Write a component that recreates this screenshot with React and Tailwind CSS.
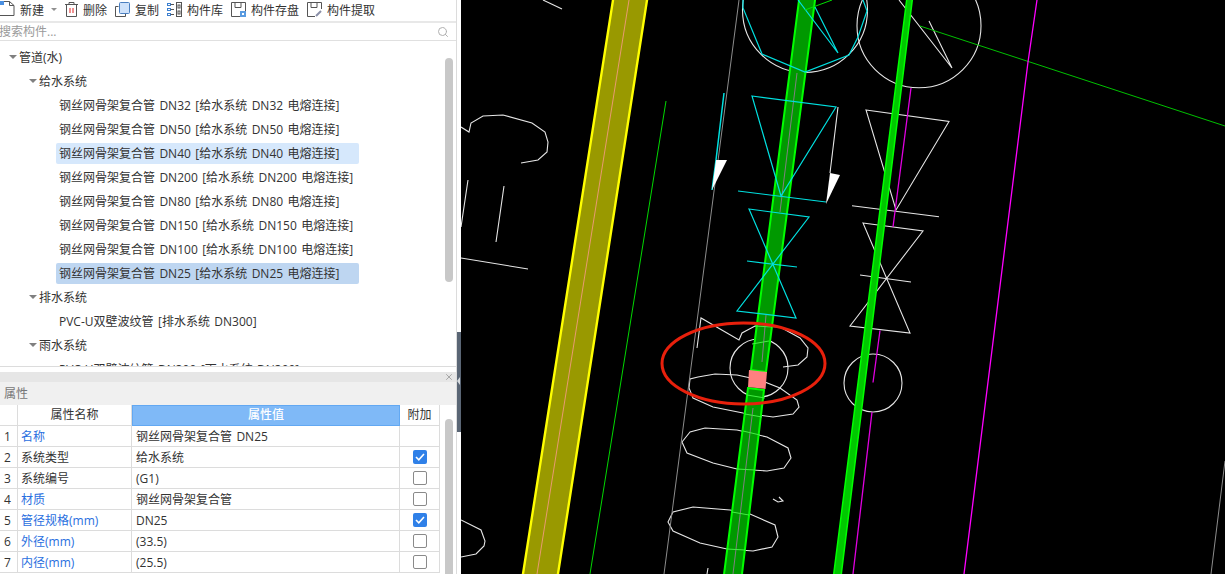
import { Search, X } from "lucide-react";

const font = { fontFamily: '"Open Sans", "Noto Sans CJK SC", sans-serif', wordSpacing: "1.3px" };

const pipes = [
  "钢丝网骨架复合管 DN32 [给水系统 DN32 电熔连接]",
  "钢丝网骨架复合管 DN50 [给水系统 DN50 电熔连接]",
  "钢丝网骨架复合管 DN40 [给水系统 DN40 电熔连接]",
  "钢丝网骨架复合管 DN200 [给水系统 DN200 电熔连接]",
  "钢丝网骨架复合管 DN80 [给水系统 DN80 电熔连接]",
  "钢丝网骨架复合管 DN150 [给水系统 DN150 电熔连接]",
  "钢丝网骨架复合管 DN100 [给水系统 DN100 电熔连接]",
  "钢丝网骨架复合管 DN25 [给水系统 DN25 电熔连接]",
];

const props = [
  { name: "名称", value: "钢丝网骨架复合管 DN25", blue: true, check: null },
  { name: "系统类型", value: "给水系统", check: true },
  { name: "系统编号", value: "(G1)", check: false },
  { name: "材质", value: "钢丝网骨架复合管", blue: true, check: false },
  { name: "管径规格(mm)", value: "DN25", blue: true, check: true },
  { name: "外径(mm)", value: "(33.5)", blue: true, check: false },
  { name: "内径(mm)", value: "(25.5)", blue: true, check: false },
];

function Caret() {
  return <span className="h-0 w-0 border-x-[4px] border-t-[4px] border-x-transparent border-t-[#808080]" />;
}

function ToolItem({ icon, label, className = "" }) {
  return (
    <div className={`flex items-center gap-[5px] ${className}`}>
      {icon}
      <span className="mt-[4px]">{label}</span>
    </div>
  );
}

const NewIcon = (
  <svg width="15" height="16" viewBox="0 0 15 16" fill="none" className="shrink-0">
    <path d="M0 14.5H14V4.5L9.5 0.5H4" stroke="#555" />
    <path d="M9.5 0.5V4.5H14" stroke="#555" />
    <rect x="0" y="0" width="4" height="4" fill="#4a90e2" />
  </svg>
);

const DeleteIcon = (
  <svg width="13" height="15" viewBox="0 0 13 15" fill="none" className="shrink-0">
    <path d="M0 2.5H13M4 2.5V0.5H9V2.5M1.5 2.5V14.5H11.5V2.5" stroke="#555" />
    <path d="M5 6V11M8 6V11" stroke="#e02020" />
  </svg>
);

const CopyIcon = (
  <svg width="15" height="15" viewBox="0 0 15 15" fill="none" className="shrink-0">
    <path d="M3.5 4.5H0.5V14.5H10.5V12" stroke="#555" />
    <rect x="4.5" y="0.5" width="10" height="11" rx="1" fill="#cfe2fa" stroke="#4a7fc0" />
  </svg>
);

const LibIcon = (
  <svg width="15" height="15" viewBox="0 0 15 15" fill="none" className="shrink-0">
    <rect x="0.5" y="1.5" width="3" height="2" stroke="#3b7fd0" />
    <rect x="0.5" y="6.5" width="3" height="2" stroke="#3b7fd0" />
    <rect x="0.5" y="11.5" width="3" height="2" stroke="#3b7fd0" />
    <path d="M3.5 2.5H7M3.5 7.5H7M3.5 12.5H7" stroke="#555" />
    <rect x="9.5" y="0.5" width="5" height="14" stroke="#555" />
    <rect x="11" y="3" width="2" height="3" stroke="#555" />
    <rect x="11" y="9" width="2" height="3" stroke="#555" />
  </svg>
);

const SaveIcon = (
  <svg width="15" height="15" viewBox="0 0 15 15" fill="none" className="shrink-0">
    <path d="M9 14.5H0.5V0.5H14.5V9" stroke="#555" />
    <path d="M4 1V5.5H10V1" stroke="#555" />
    <rect x="9" y="9" width="6" height="6" fill="#5a9be0" />
    <rect x="11" y="11" width="2" height="2" fill="#fff" />
  </svg>
);

const ExtractIcon = (
  <svg width="15" height="15" viewBox="0 0 15 15" fill="none" className="shrink-0">
    <path d="M8 14.5H0.5V0.5H14.5V7" stroke="#555" />
    <path d="M4 1V5.5H10V1" stroke="#555" />
    <path d="M9 14L14 9" stroke="#8a8fa8" strokeWidth="2" />
  </svg>
);

function Toolbar() {
  return (
    <div className="flex h-[21px] shrink-0 items-center pb-[3px] text-[12px] text-[#333]">
      <ToolItem icon={NewIcon} label="新建" />
      <span className="ml-[7px] h-0 w-0 border-x-[3px] border-t-[3px] border-x-transparent border-t-[#909090]" />
      <ToolItem icon={DeleteIcon} label="删除" className="ml-[8px]" />
      <ToolItem icon={CopyIcon} label="复制" className="ml-[8px]" />
      <ToolItem icon={LibIcon} label="构件库" className="ml-[8px]" />
      <ToolItem icon={SaveIcon} label="构件存盘" className="ml-[8px]" />
      <ToolItem icon={ExtractIcon} label="构件提取" className="ml-[8px]" />
    </div>
  );
}

function TreeGroup({ label, indent }) {
  return (
    <div className={`flex h-[24px] items-center gap-[2px] ${indent}`}>
      <Caret />
      <span className="mt-[2px]">{label}</span>
    </div>
  );
}

function TreeLeaf({ label, selected }) {
  const bg = selected === "hover" ? "bg-[#d6e8fc]" : selected === "active" ? "bg-[#bed6f1]" : "";
  return (
    <div className="flex h-[24px] items-center pl-[56px]">
      <div className={`flex h-[21px] w-[303px] items-center rounded-[2px] pl-[3px] ${bg}`}>
        <span className="mt-[2px]">{label}</span>
      </div>
    </div>
  );
}

function Tree() {
  return (
    <div className="relative h-[326px] shrink-0 overflow-hidden border-b border-[#dcdcdc] pt-[4px] text-[12px] text-[#333]">
      <TreeGroup label="管道(水)" indent="pl-[9px]" />
      <TreeGroup label="给水系统" indent="pl-[29px]" />
      {pipes.map((p, i) => (
        <TreeLeaf key={p} label={p} selected={i === 2 ? "hover" : i === 7 ? "active" : null} />
      ))}
      <TreeGroup label="排水系统" indent="pl-[29px]" />
      <TreeLeaf label="PVC-U双壁波纹管 [排水系统 DN300]" />
      <TreeGroup label="雨水系统" indent="pl-[29px]" />
      <TreeLeaf label="PVC-U双壁波纹管 DN300 [雨水系统 DN300]" />
      <div className="absolute left-[445px] top-[17px] h-[224px] w-[8px] rounded-full bg-[#c8c8c8]" />
    </div>
  );
}

function CheckBox({ checked }) {
  if (checked) {
    return (
      <span className="flex h-[14px] w-[14px] items-center justify-center rounded-[2px] bg-[#2f80e8]">
        <svg width="10" height="8" viewBox="0 0 10 8" fill="none">
          <path d="M1 4L3.8 6.8L9 1" stroke="#fff" strokeWidth="1.6" />
        </svg>
      </span>
    );
  }
  return <span className="h-[14px] w-[14px] rounded-[2px] border border-[#8a8a8a] bg-white" />;
}

function PropertyTable() {
  const cell = "flex h-[21px] items-center border-b border-r border-[#dcdcdc]";
  return (
    <div className="relative flex-1 overflow-hidden bg-white text-[12px] text-[#333]">
      <div className="grid w-[440px] grid-cols-[18px_114px_268px_40px]">
        <div className={`${cell} h-[20.5px]`} />
        <div className={`${cell} h-[20.5px] justify-center`}>属性名称</div>
        <div className="flex h-[20.5px] items-center justify-center border border-[#62a8f2] bg-[#7fb9f7] font-medium text-white">属性值</div>
        <div className={`${cell} h-[20.5px] justify-center`}>附加</div>
        {props.map((row, i) => (
          <div key={row.name} className="contents">
            <div className={`${cell} pl-[4px]`}><span className="mt-[2px]">{i + 1}</span></div>
            <div className={`${cell} pl-[3px] ${row.blue ? "text-[#2a6fe0]" : ""}`}><span className="mt-[2px]">{row.name}</span></div>
            <div className={`${cell} pl-[4px]`}><span className="mt-[2px]">{row.value}</span></div>
            <div className={`${cell} justify-center`}>
              {row.check !== null && <CheckBox checked={row.check} />}
            </div>
          </div>
        ))}
      </div>
      <div className="absolute left-[445px] top-[14px] h-[200px] w-[8px] rounded-full bg-[#c8c8c8]" />
    </div>
  );
}

function LeftPanel() {
  return (
    <aside className="flex h-full w-[457px] shrink-0 flex-col border-r border-[#dcdcdc] bg-white">
      <Toolbar />
      <div className="h-[2px] shrink-0 bg-[#e8e8e8]" />
      <div className="flex h-[18px] shrink-0 items-center justify-between border-b border-[#e0e0e0] pr-[7px] text-[12px] text-[#9a9a9a]">
        <span className="-ml-[1px]">搜索构件...</span>
        <Search className="h-[12px] w-[12px] text-[#b0b0b0]" strokeWidth={2} />
      </div>
      <Tree />
      <div className="h-[5px] shrink-0" />
      <div className="flex h-[10px] shrink-0 items-center justify-end bg-[#e6e6e6] pr-[2px]">
        <X className="h-[10px] w-[10px] text-[#9a9a9a]" strokeWidth={2} />
      </div>
      <div className="flex h-[23px] shrink-0 items-center bg-[#f0f0f0] pl-[4px] text-[12px] text-[#777]">属性</div>
      <PropertyTable />
    </aside>
  );
}

function Divider() {
  return (
    <div className="flex h-full w-[4px] shrink-0 flex-col bg-white">
      <div className="h-[332px]" />
      <div className="relative h-[100px] bg-[#5a6675]">
        <span className="absolute left-0 top-[45px] h-0 w-0 border-y-[4px] border-r-[3px] border-y-transparent border-r-[#d8dce0]" />
      </div>
    </div>
  );
}

function CadDrawing() {
  return (
    <svg viewBox="461 0 764 574" width="764" height="574" fill="none" className="block">
      {/* 图纸白线 */}
      <g stroke="#e6e6e6" strokeWidth="1.1">
        <path d="M543 0L562 9" />
        <path d="M461 127L469 132L471 123L483 116L503 115L532 123L545 132L548 142L547 152L538 160L521 163" />
        <path d="M468 180L461 227M504 186L496 242M461 258L528 269" />
        <path d="M461 520L481 530L485 541L484 546L476 554L461 557" />
        <path d="M697 348L701 318L739 340L742 333L755 326L780 327L800 338L808 348L807 357L798 365L783 367" />
        <path d="M690 379L689 388L693 398L713 407L743 413L773 417L793 414L799 407L797 400L780 388L760 380L737 375L715 374L698 377Z" />
        <path d="M690 432L682 442L687 453L713 463L737 469L767 471L784 468L791 458L788 448L767 437L737 430L705 428Z" />
        <path d="M673 512L668 522L673 531L700 543L727 549L753 551L772 547L778 537L775 525L750 514L730 510L693 507Z" />
        <path d="M773 499L778 502L783 501L779 497M708 568L707 574" />
        <circle cx="759" cy="368" r="29" />
        <circle cx="805" cy="10" r="62.5" />
        <circle cx="919" cy="25.7" r="62" />
        <circle cx="873" cy="383" r="29" />
        <path d="M899 0L952 68M929 21L952 68" />
        <path d="M866 110L949 121.5L896 210Z" />
        <path d="M852 205.7L939 216.7" />
        <path d="M863 223L923 231L850 326L910 333Z" />
        <path d="M860 275L911 282" />
        <path d="M838 107L830 173" />
      </g>
      <path d="M739 0L664 574" stroke="#8c8c8c" />
      <path d="M1225 461L1211 574" stroke="#8c8c8c" />
      <path d="M666 101L590 574" stroke="#00d800" />
      <path d="M920 26L1225 126" stroke="#00c000" />
      <path d="M1037 0L1028 62L964 574" stroke="#ff00ff" strokeWidth="1.3" />
      <path d="M911 88L893 227M880 330.5L873 382.5M872 412L853 574" stroke="#e000e0" strokeWidth="1.3" />

      {/* 黄色管 */}
      <polygon points="613.8,-5 647.8,-5 557.2,579 522.2,579" fill="#999900" stroke="#ffff00" strokeWidth="2.4" />
      <path d="M629 0L537 574" stroke="#e89a70" />

      {/* 细绿管 */}
      <polygon points="907.3,-5 912.9,-5 840.7,579 833.1,579" fill="#00c800" stroke="#00ff00" strokeWidth="1.5" />

      {/* 主绿管 */}
      <polygon points="799.7,-5 815.7,-5 766,372 751,370" fill="#009900" stroke="#00ff00" strokeWidth="2" />
      <polygon points="748,388 764,390 741.4,579 723.4,579" fill="#009900" stroke="#00ff00" strokeWidth="2" />
      <polygon points="749,370 767,372 765.5,389 748,387" fill="#ff8080" />
      <path d="M797 73L780 212M766 315L762 362M753 408L733 574" stroke="#808080" />
      <path d="M755 326L772 327M747 395L765 398M745 414L762 417M743 431L760 435M737 469L755 470M732 512L749 515M727 549L745 550M752 344L769 341" stroke="#44ee44" />

      {/* 青色阀门 */}
      <g stroke="#00e0e0" strokeWidth="1.2">
        <path d="M743 0V8L762 54L805 72L849 55L858 37L867 11L863 0" />
        <path d="M798 0L838 53M815 7L838 53" />
        <path d="M752 96L836 107L781 196Z" />
        <path d="M738 191L826 202" />
        <path d="M749 209L809 217L737 311L796 318Z" />
        <path d="M747 261L797 267" />
        <path d="M724 93L716 160L712 190" strokeWidth="1.5" />
      </g>
      <path d="M805 10L832 0" stroke="#00e000" />
      <polygon points="716,160 727,160 712,190" fill="#fff" />
      <polygon points="830,173 840,175 826,204" fill="#fff" />

      <ellipse cx="743.5" cy="363.5" rx="81.5" ry="40.5" stroke="#e8200c" strokeWidth="3" />
    </svg>
  );
}

export default function App() {
  return (
    <div className="flex h-[574px] w-[1225px] overflow-hidden bg-black" style={font}>
      <LeftPanel />
      <Divider />
      <main className="flex-1 bg-black">
        <CadDrawing />
      </main>
    </div>
  );
}
